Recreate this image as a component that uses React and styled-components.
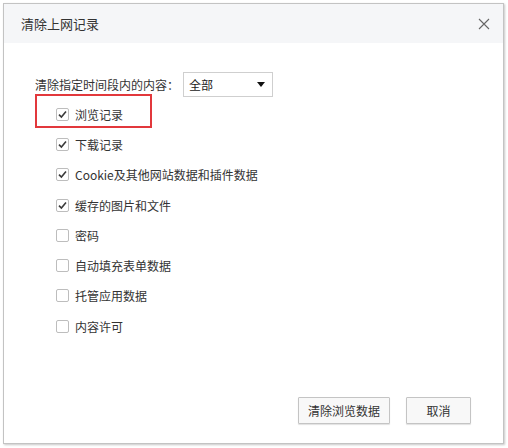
import React from 'react'
import styled, { createGlobalStyle } from 'styled-components'

const GlobalStyle = createGlobalStyle`
  html, body {
    margin: 0;
    padding: 0;
    background: #fff;
  }
  body {
    font-family: "Microsoft YaHei", "Noto Sans CJK SC", "Noto Sans", sans-serif;
    color: #333;
  }
`

const Page = styled.div`
  width: 508px;
  height: 448px;
  padding: 3px 0 0 3px;
  box-sizing: border-box;
`

const Dialog = styled.div`
  width: 501px;
  height: 441px;
  box-sizing: border-box;
  border: 1px solid #c3c3c3;
  box-shadow: 1px 1px 2px rgba(0, 0, 0, 0.22);
  background: #fff;
  display: flex;
  flex-direction: column;
`

const Header = styled.div`
  height: 39px;
  background: #f5f6f8;
  display: flex;
  align-items: center;
  justify-content: space-between;
  padding: 0 13px 0 17px;
`

const Title = styled.span`
  font-size: 13px;
  color: #333;
`

const Close = styled.button`
  border: none;
  background: none;
  padding: 0;
  width: 12px;
  height: 12px;
  display: flex;
  cursor: pointer;
`

const Body = styled.div`
  padding: 29px 0 0 31px;
  flex: 1;
`

const RangeRow = styled.div`
  display: flex;
  align-items: center;
  gap: 4px;
  font-size: 12px;
`

const Select = styled.div`
  width: 90px;
  height: 25px;
  box-sizing: border-box;
  border: 1px solid #cfcfcf;
  display: flex;
  align-items: center;
  justify-content: space-between;
  padding: 0 7px 0 5px;
  font-size: 12px;
  color: #222;
`

const List = styled.div`
  position: relative;
  margin-top: 2px;
  padding-left: 21px;
`

const Highlight = styled.div`
  position: absolute;
  left: 0;
  top: -5px;
  width: 117px;
  height: 34px;
  box-sizing: border-box;
  border: 2px solid #e2383c;
  pointer-events: none;
`

const Row = styled.label`
  display: flex;
  align-items: center;
  height: 30.3px;
  gap: 6px;
  font-size: 12px;
  color: #333;
`

const Box = styled.span`
  width: 13px;
  height: 13px;
  box-sizing: border-box;
  border: 1px solid #bdbdbd;
  border-radius: 2px;
  background: #fff;
  display: flex;
  align-items: center;
  justify-content: center;
`

const Footer = styled.div`
  display: flex;
  justify-content: flex-end;
  gap: 16px;
  padding: 0 32px 19px 0;
`

const Button = styled.button`
  width: ${p => p.w}px;
  height: 27px;
  box-sizing: border-box;
  border: 1px solid #c4c4c4;
  border-radius: 1px;
  background: #f8f8f8;
  box-shadow: 0 1px 1px rgba(0, 0, 0, 0.12);
  font-family: inherit;
  font-size: 12px;
  color: #333;
  padding: 0;
  cursor: pointer;
`

const items = [
  { label: '浏览记录', checked: true },
  { label: '下载记录', checked: true },
  { label: 'Cookie及其他网站数据和插件数据', checked: true },
  { label: '缓存的图片和文件', checked: true },
  { label: '密码', checked: false },
  { label: '自动填充表单数据', checked: false },
  { label: '托管应用数据', checked: false },
  { label: '内容许可', checked: false },
]

const Check = () => (
  <svg width="9" height="9" viewBox="0 0 9 9">
    <path d="M1 4.6 L3.4 7 L8 1.6" fill="none" stroke="#3a3a3a" strokeWidth="1.6" />
  </svg>
)

export default function App() {
  return (
    <Page>
      <GlobalStyle />
      <Dialog>
        <Header>
          <Title>清除上网记录</Title>
          <Close aria-label="关闭">
            <svg width="12" height="12" viewBox="0 0 12 12">
              <path d="M1 1 L11 11 M11 1 L1 11" stroke="#666" strokeWidth="1.1" />
            </svg>
          </Close>
        </Header>
        <Body>
          <RangeRow>
            <span>清除指定时间段内的内容：</span>
            <Select>
              <span>全部</span>
              <svg width="8" height="5" viewBox="0 0 8 5">
                <path d="M0 0 L8 0 L4 5 Z" fill="#111" />
              </svg>
            </Select>
          </RangeRow>
          <List>
            <Highlight />
            {items.map(item => (
              <Row key={item.label}>
                <Box>{item.checked && <Check />}</Box>
                <span>{item.label}</span>
              </Row>
            ))}
          </List>
        </Body>
        <Footer>
          <Button w={92}>清除浏览数据</Button>
          <Button w={65}>取消</Button>
        </Footer>
      </Dialog>
    </Page>
  )
}
